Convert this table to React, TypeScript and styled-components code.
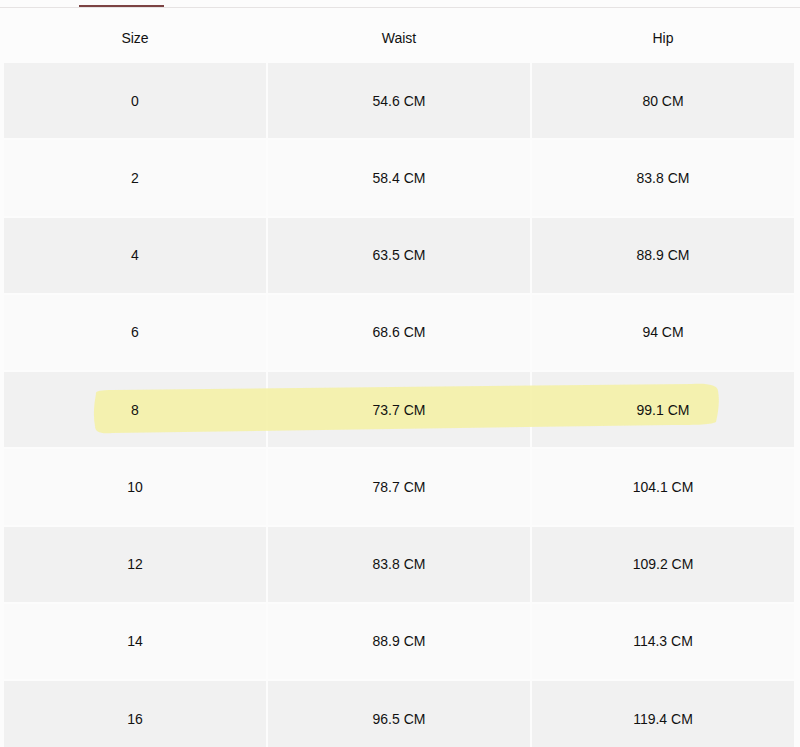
import React from 'react';
import styled, { createGlobalStyle } from 'styled-components';

const GlobalStyle = createGlobalStyle`
  html, body {
    margin: 0;
    padding: 0;
    background: #fcfcfc;
  }
  body {
    font-family: "Liberation Sans", Arial, sans-serif;
    color: #111;
  }
`;

const Page = styled.div`
  width: 800px;
  height: 747px;
  overflow: hidden;
  position: relative;
  background: #fcfcfc;
`;

const TabBar = styled.div`
  height: 8px;
  border-bottom: 1px solid #e6e3e3;
  box-sizing: border-box;
  padding-left: 79px;
  display: flex;
  align-items: flex-end;
`;

const TabIndicator = styled.div`
  width: 85px;
  height: 2px;
  background: #7c4343;
`;

const Table = styled.div`
  margin-left: 4px;
  width: 790px;
  display: grid;
  grid-template-columns: repeat(3, 1fr);
  column-gap: 2px;
  row-gap: 2px;
`;

const HeadCell = styled.div`
  box-sizing: border-box;
  height: 53px;
  padding-top: 6px;
  display: flex;
  align-items: center;
  justify-content: center;
  font-size: 14px;
`;

const Cell = styled.div<{ $shade: boolean }>`
  height: 75.25px;
  display: flex;
  align-items: center;
  justify-content: center;
  font-size: 14px;
  background: ${(p) => (p.$shade ? '#f1f1f1' : '#fafafa')};
`;

const CellText = styled.span`
  position: relative;
  z-index: 2;
`;

const Highlight = styled.svg`
  position: absolute;
  z-index: 1;
  left: 92px;
  top: 380px;
  width: 630px;
  height: 56px;
  pointer-events: none;
`;

const rows: [string, string, string][] = [
  ['0', '54.6 CM', '80 CM'],
  ['2', '58.4 CM', '83.8 CM'],
  ['4', '63.5 CM', '88.9 CM'],
  ['6', '68.6 CM', '94 CM'],
  ['8', '73.7 CM', '99.1 CM'],
  ['10', '78.7 CM', '104.1 CM'],
  ['12', '83.8 CM', '109.2 CM'],
  ['14', '88.9 CM', '114.3 CM'],
  ['16', '96.5 CM', '119.4 CM'],
];

export default function App() {
  return (
    <Page>
      <GlobalStyle />
      <TabBar>
        <TabIndicator />
      </TabBar>
      <Table>
        <HeadCell>Size</HeadCell>
        <HeadCell>Waist</HeadCell>
        <HeadCell>Hip</HeadCell>
        {rows.map((r, i) =>
          r.map((v, j) => (
            <Cell key={`${i}-${j}`} $shade={i % 2 === 0}>
              <CellText>{v}</CellText>
            </Cell>
          ))
        )}
      </Table>
      {/* marker stroke over the size 8 row */}
      <Highlight viewBox="0 0 630 56">
        <path
          d="M4 14 C 3 11, 8 10, 20 10 L 300 7 L 600 4 C 615 3, 626 5, 626 11 C 628 21, 626 34, 624 42 C 618 45, 600 45, 580 45 L 300 49 L 20 53 C 8 54, 3 52, 3 46 C 1 36, 2 24, 4 14 Z"
          fill="#f4f1a9"
          opacity="0.92"
        />
      </Highlight>
    </Page>
  );
}
